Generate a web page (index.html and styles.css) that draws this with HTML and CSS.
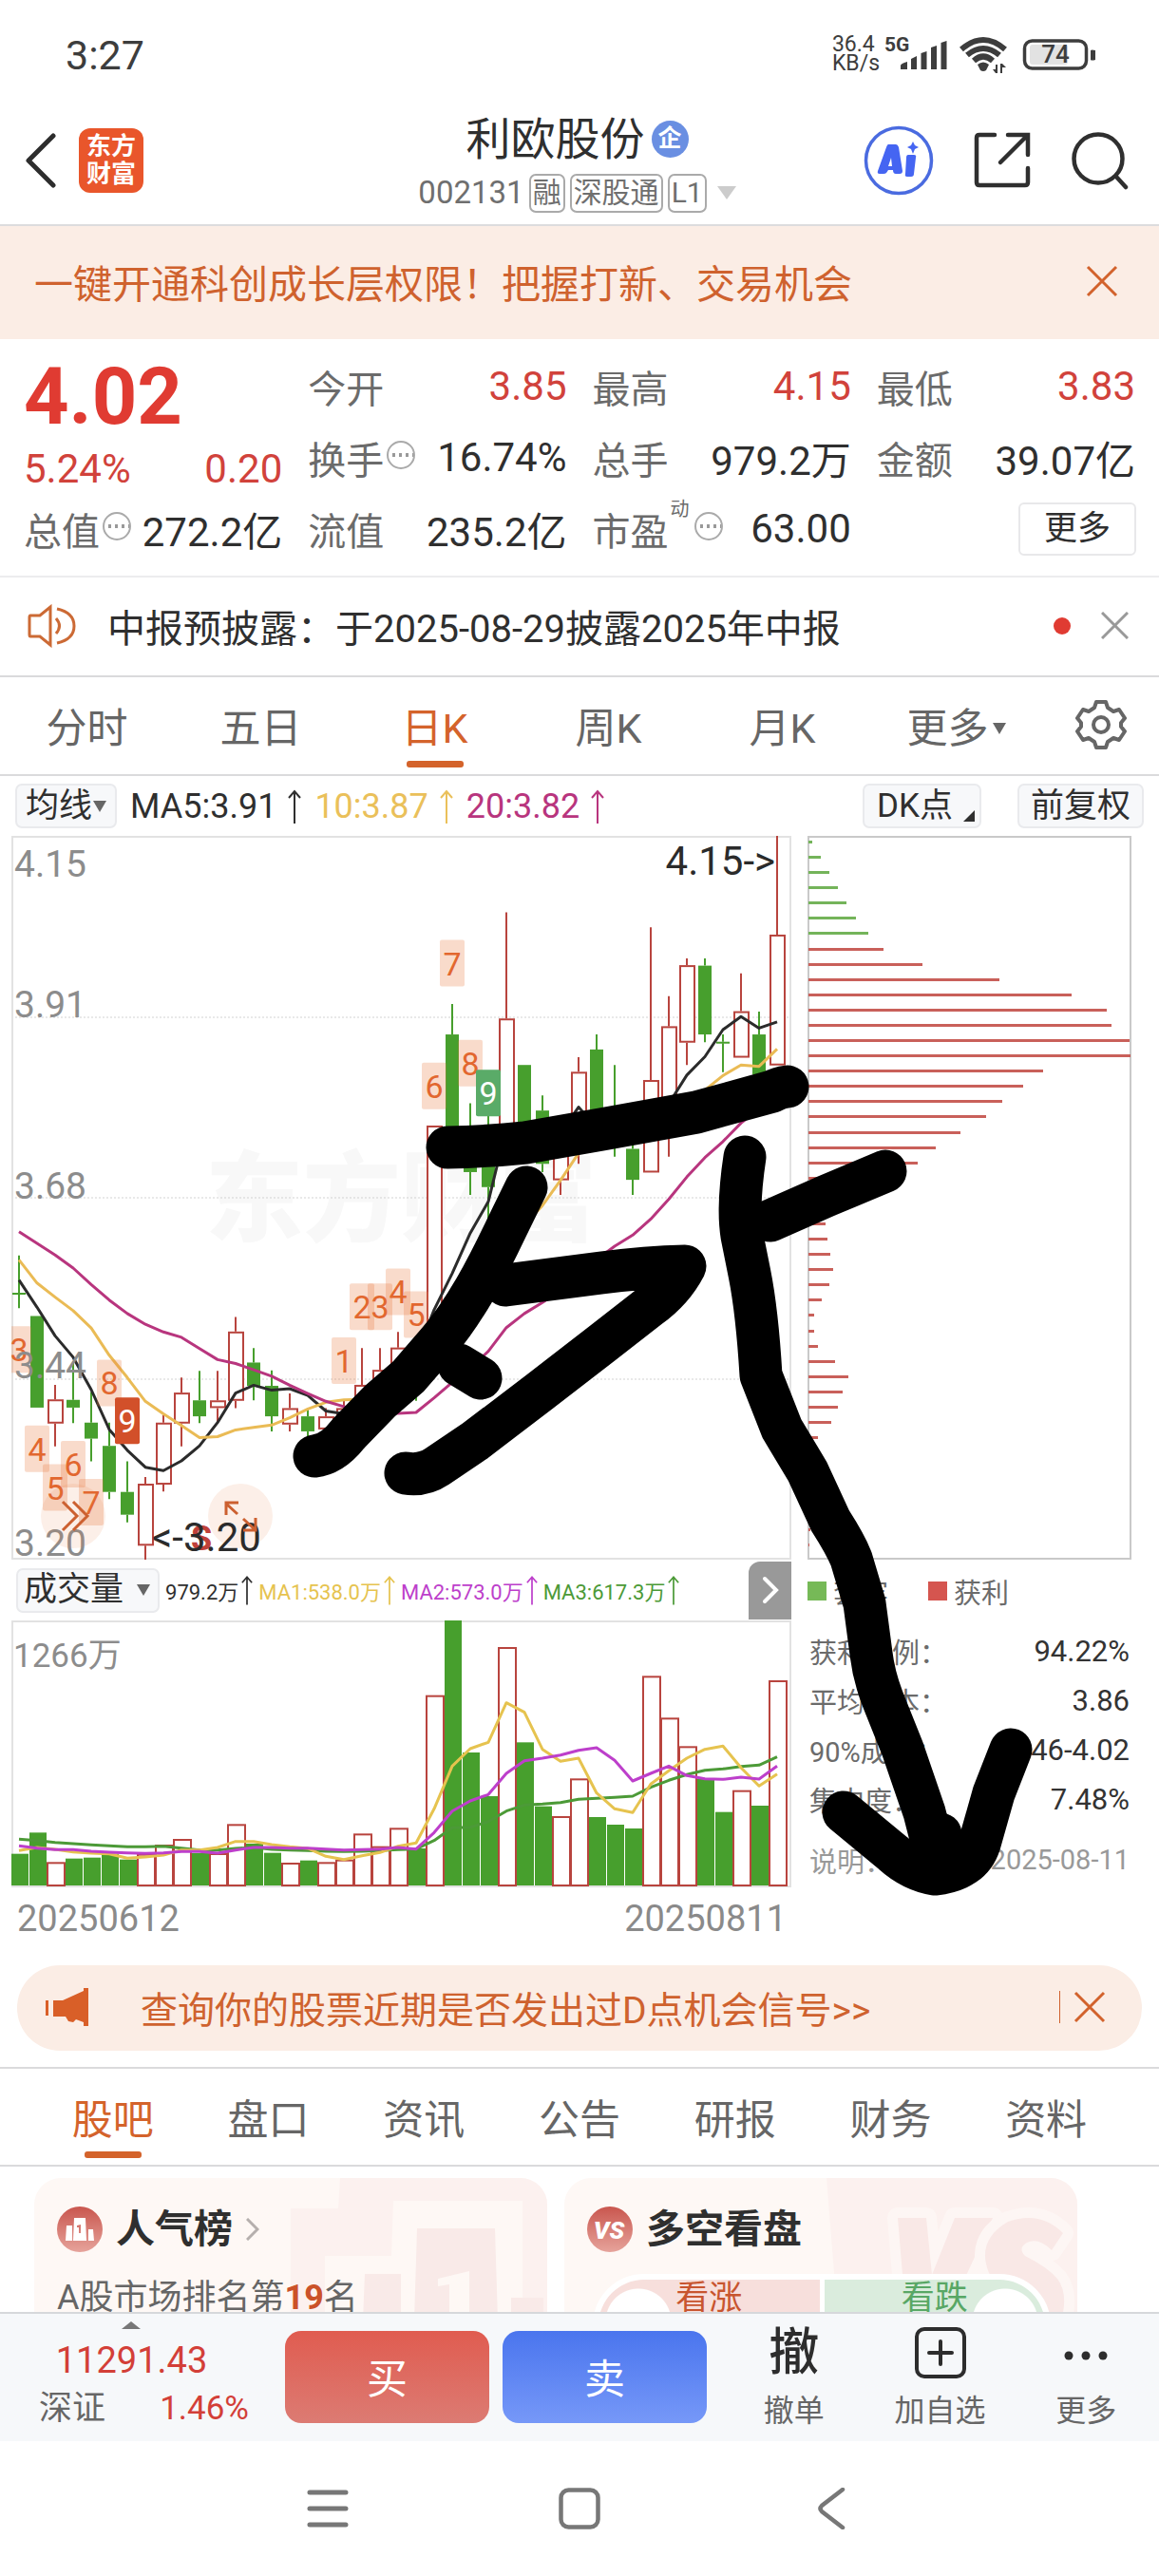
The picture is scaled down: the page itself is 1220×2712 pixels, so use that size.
FILE: index.html
```html
<!DOCTYPE html>
<html lang="zh-CN">
<head>
<meta charset="utf-8">
<meta name="viewport" content="width=device-width, initial-scale=1">
<title>利欧股份 002131</title>
<link rel="stylesheet" href="styles.css">
</head>
<body>
<div class="app">

  <div class="status">
    <span class="status-time">3:27</span>
    <span class="status-speed">36.4<br>KB/s</span>
    <svg class="status-icons" viewBox="930 36 225 44" width="225" height="44" aria-hidden="true">
      <text x="931" y="54" class="status-net">5G</text>
      <g fill="#3d3d3d">
        <path d="M948 73v-4q0-2 7-4v8zM959 73V62l6-3v14zM969.500 73V56l6-2v19zM980 73V50l6-2v25zM990.500 73V45l6-2v30z"/>
        <path d="M1029 68q6-5 12 0l-3 6q-3 2-6 0z"/>
        <path d="M1153 53v10q-4 1-5 0V53q1-1 5 0z"/>
        <path d="M1048 68h2v9h-2l-3-4h3zM1053 67h2l4 4h-4v6h-2z"/>
      </g>
      <g fill="none" stroke="#3d3d3d" stroke-width="6">
        <path d="M1012 52q23-20 46 0M1018 58q17-14 34 0M1025 64q10-9 20 0"/>
        <rect x="1078.500" y="43" width="65" height="29" rx="8" stroke-width="3.500"/>
      </g>
      <rect x="1084" y="47" width="40" height="21" rx="3" fill="#e2e2e2"/>
      <text x="1111" y="66" text-anchor="middle" class="status-battery">74</text>
    </svg>
  </div>

  <header class="header">
    <div class="header-left">
      <button class="icon-btn" aria-label="返回"><svg width="34" height="58" viewBox="0 0 34 58"><path d="M30 3 4 29l26 26" fill="none" stroke="#2d2d2d" stroke-width="5" stroke-linecap="round" stroke-linejoin="round"/></svg></button>
      <a class="logo" href="#">东方<br>财富</a>
    </div>
    <div class="header-title">
      <h1>利欧股份<span class="corp">企</span></h1>
      <div class="header-code">002131<span class="tag">融</span><span class="tag">深股通</span><span class="tag">L1</span><span class="caret"></span></div>
    </div>
    <div class="header-right">
      <button class="icon-btn" aria-label="AI"><svg width="74" height="74" viewBox="0 0 74 74"><circle cx="37" cy="37" r="34.500" fill="none" stroke="#4a6be0" stroke-width="3.500"/><path fill="#4565f2" fill-rule="evenodd" d="M26 20h8q2 0 3 3l4 25q0 3-3 3h-4q-3 0-3-4h-5l-2 3q-1 1-3 1h-4q-3 0-2-3l9-25q1-3 2-3zm3 14-3 9h4zM47 31h6q3 0 2 3l-2 17q0 3-3 3h-4q-3 0-2-3l1-17q0-3 2-3zM52 17l2 4 4 2-4 2-2 5-2-5-4-2 4-2z"/></svg></button>
      <button class="icon-btn" aria-label="分享"><svg width="60" height="60" viewBox="0 0 60 60"><path d="M22 3H6Q3 3 3 6v47q0 3 3 3h48q3 0 3-3V38M36 3h21v21M56 4 28 32" fill="none" stroke="#2f2f2f" stroke-width="4.500" stroke-linecap="round"/></svg></button>
      <button class="icon-btn" aria-label="搜索"><svg width="62" height="62" viewBox="0 0 62 62"><circle cx="29" cy="29" r="25.500" fill="none" stroke="#2f2f2f" stroke-width="4.500"/><path d="m48 48 10 11" stroke="#2f2f2f" stroke-width="4.500" stroke-linecap="round"/></svg></button>
    </div>
  </header>

  <div class="banner">
    <a href="#">一键开通科创成长层权限！把握打新、交易机会</a>
    <button class="icon-btn" aria-label="关闭"><svg width="34" height="34" viewBox="0 0 34 34"><path d="m2 2 30 30M32 2 2 32" stroke="#d2622c" stroke-width="3"/></svg></button>
  </div>

  <section class="quote">
    <div class="quote-col">
      <div class="price">4.02</div>
      <div class="stat change up"><span>5.24%</span><span>0.20</span></div>
      <div class="stat"><span class="label">总值<i class="info"></i></span><span>272.2亿</span></div>
    </div>
    <div class="quote-col">
      <div class="stat"><span class="label">今开</span><span class="up">3.85</span></div>
      <div class="stat"><span class="label">换手<i class="info"></i></span><span>16.74%</span></div>
      <div class="stat"><span class="label">流值</span><span>235.2亿</span></div>
    </div>
    <div class="quote-col">
      <div class="stat"><span class="label">最高</span><span class="up">4.15</span></div>
      <div class="stat"><span class="label">总手</span><span>979.2万</span></div>
      <div class="stat"><span class="label">市盈<small>动</small><i class="info"></i></span><span>63.00</span></div>
    </div>
    <div class="quote-col">
      <div class="stat"><span class="label">最低</span><span class="up">3.83</span></div>
      <div class="stat"><span class="label">金额</span><span>39.07亿</span></div>
      <div class="stat stat-end"><button class="more-btn">更多</button></div>
    </div>
  </section>

  <div class="notice">
    <svg width="52" height="46" viewBox="0 0 52 46"><g fill="none" stroke="#cc6a35" stroke-width="3"><path d="M3 12h10L24 3v40L13 34H3q-1 0-1-2V14q0-2 1-2zM30 15q7 8 0 16"/><path d="M31 5q18 4 18 18T31 41"/></g></svg>
    <a href="#">中报预披露：于2025-08-29披露2025年中报</a>
    <span class="dot"></span>
    <button class="icon-btn" aria-label="关闭"><svg width="29" height="29" viewBox="0 0 29 29"><path d="m1 1 27 27M28 1 1 28" stroke="#999" stroke-width="3"/></svg></button>
  </div>

  <nav class="periods">
    <button>分时</button><button>五日</button><button class="on">日K</button><button>周K</button><button>月K</button><button>更多<span class="caret caret-small"></span></button>
    <button class="gear" aria-label="设置"><svg width="54" height="54" viewBox="0 0 54 54"><g fill="none" stroke="#666" stroke-width="4" stroke-linejoin="round"><path d="M22 3h10l2 6 6 4 6-2 6 9-4 5v4l4 5-6 9-6-2-6 4-2 6H22l-2-6-6-4-6 2-6-9 4-5v-4l-4-5 6-9 6 2 6-4z"/><circle cx="27" cy="27" r="8"/></g></svg></button>
  </nav>

  <section class="charts">
    <div class="toolbar">
      <button class="chip">均线<span class="caret caret-small"></span></button>
      <span class="ma">MA5:3.91<svg class="rise" viewBox="0 0 14 36"><path d="M7 36V2M1 9l6-7 6 7"/></svg></span>
      <span class="ma ma10">10:3.87<svg class="rise" viewBox="0 0 14 36"><path d="M7 36V2M1 9l6-7 6 7"/></svg></span>
      <span class="ma ma20">20:3.82<svg class="rise" viewBox="0 0 14 36"><path d="M7 36V2M1 9l6-7 6 7"/></svg></span>
      <button class="chip chip-dk">DK点<i class="corner"></i></button>
      <button class="chip chip-adj">前复权</button>
    </div>

    <div class="panels">
      <div class="panel-main">
        <svg id="candles" viewBox="12 879 821 762"></svg>
        <div class="volbar">
          <button class="chip chip-vol">成交量<span class="caret caret-small"></span></button>
          <span class="vma">979.2万<svg class="rise" viewBox="0 0 14 36"><path d="M7 36V2M1 9l6-7 6 7"/></svg></span>
          <span class="vma vma1">MA1:538.0万<svg class="rise" viewBox="0 0 14 36"><path d="M7 36V2M1 9l6-7 6 7"/></svg></span>
          <span class="vma vma2">MA2:573.0万<svg class="rise" viewBox="0 0 14 36"><path d="M7 36V2M1 9l6-7 6 7"/></svg></span>
          <span class="vma vma3">MA3:617.3万<svg class="rise" viewBox="0 0 14 36"><path d="M7 36V2M1 9l6-7 6 7"/></svg></span>
          <button class="next" aria-label="下一个"><svg width="20" height="30" viewBox="0 0 20 30"><path d="m4 3 12 12L4 27" fill="none" stroke="#fff" stroke-width="4" stroke-linecap="round"/></svg></button>
        </div>
        <svg id="volume" viewBox="12 1705 821 281"></svg>
        <div class="dates"><span>20250612</span><span>20250811</span></div>
      </div>
      <div class="panel-side">
        <svg id="chips" viewBox="850 879 341 762"></svg>
        <div class="legend"><i class="sq"></i><span>套牢</span><i class="sq sq-red"></i><span>获利</span></div>
        <div class="kv"><span>获利比例：</span><b>94.22%</b></div>
        <div class="kv"><span>平均成本：</span><b>3.86</b></div>
        <div class="kv"><span>90%成本：</span><b>3.46-4.02</b></div>
        <div class="kv"><span>集中度：</span><b>7.48%</b></div>
        <div class="kv kv-note"><span>说明：</span><span>2025-08-11</span></div>
      </div>
    </div>

    <svg class="ink" viewBox="0 816 1220 1237" aria-hidden="true">
      <path d="M471 1207Q515 1206 553 1202L633 1188 733 1170 813 1148Q820 1144 829 1143"/>
      <path d="M554 1249 533 1292Q515 1330 500 1356 480 1390 462 1411L430 1448 400 1474 367 1508Q350 1530 331 1532"/>
      <path d="M532 1352 633 1339Q680 1333 721 1332 708 1357 683 1375L633 1414 567 1465 500 1516 460 1543Q445 1553 427 1550"/>
      <path d="M483 1436 506 1450"/>
      <path d="M784 1217Q776 1270 781 1300L789 1340Q797 1380 801 1447L823 1503 850 1548 874 1600Q890 1625 896 1640L910 1687 917 1740Q920 1765 930 1790L950 1840 973 1907 984 1950"/>
      <path d="M811 1284 870 1258 932 1232"/>
      <path d="M888 1907 940 1950Q960 1968 984 1972 1022 1968 1031 1940L1046 1887 1064 1841M984 1950 990 1930"/>
    </svg>
  </section>

  <div class="promo">
    <svg width="46" height="40" viewBox="0 0 46 40"><path fill="#d95f28" d="M0 13h3v16H0zM8 13h10L40 3V0h5v40h-5v-4l-8-3-3 3-5-1-3-5H8z"/></svg>
    <a href="#">查询你的股票近期是否发出过D点机会信号&gt;&gt;</a>
    <button class="icon-btn promo-close" aria-label="关闭"><svg width="34" height="34" viewBox="0 0 34 34"><path d="m2 2 30 30M32 2 2 32" stroke="#d2622c" stroke-width="3"/></svg></button>
  </div>

  <nav class="sections">
    <button class="on">股吧</button><button>盘口</button><button>资讯</button><button>公告</button><button>研报</button><button>财务</button><button>资料</button>
  </nav>

  <main class="feed">
    <article class="card">
      <svg class="card-art" viewBox="0 0 270 150" width="270" height="150"><path fill="#fcf1ef" d="M52 0h218v150H0V32h50z"/><path fill="#fef8f5" d="M108 24h136v126H36V82h70z"/><path fill="#f9eae8" d="M133 53h82l3 97h-88zM78 101h38v49H76zM232 126h34v24h-34z"/><path fill="#fef8f5" d="m155 106 33-8v52h-21v-38l-12 2z"/></svg>
      <h2><svg width="48" height="48" viewBox="0 0 48 48"><defs><linearGradient id="rg" x2="0" y2="1"><stop stop-color="#c9564e"/><stop offset="1" stop-color="#e6a39b"/></linearGradient></defs><circle cx="24" cy="24" r="24" fill="url(#rg)"/><path fill="#fff" fill-rule="evenodd" d="M10 20h6v16H9zM18 12h12l1 24H17zM33 24h5l1 12h-6zM21 20v2h2v6h2v-9z"/></svg>人气榜<svg class="chev" width="14" height="24" viewBox="0 0 14 24"><path d="m1 1 11 11L1 23" fill="none" stroke="#b5afad" stroke-width="3"/></svg></h2>
      <p>A股市场排名第<b>19</b>名</p>
    </article>
    <article class="card">
      <svg class="card-art" viewBox="0 0 264 150" width="264" height="150"><path fill="#fcf1ef" d="M0 0h264v150H12z"/><g fill="#f9e8e6" stroke="#fdf6f4" stroke-width="22" stroke-linejoin="round" paint-order="stroke"><path d="M75 42h30l6 60 24-60h40L125 150H84z"/><path d="M249 58q-24-24-58-12-34 20-20 54 8 14 34 28 6 6 4 22h38q8-28-4-44-10-12-34-24-8-8 2-14 12-6 26 8z"/></g></svg>
      <h2><svg width="48" height="48" viewBox="0 0 48 48"><circle cx="24" cy="24" r="24" fill="url(#rg)"/><text x="23" y="34" text-anchor="middle" class="vs">VS</text></svg>多空看盘</h2>
      <div class="vote"><button class="bull">看涨</button><button class="bear">看跌</button></div>
    </article>
  </main>

  <footer class="trade">
    <div class="index">
      <span class="index-arrow"></span>
      <span class="index-value">11291.43</span>
      <span class="index-row"><span>深证</span><span class="pct">1.46%</span></span>
    </div>
    <button class="buy">买</button>
    <button class="sell">卖</button>
    <button class="act"><span class="glyph">撤</span>撤单</button>
    <button class="act"><svg width="56" height="56" viewBox="0 0 56 56"><rect x="3" y="3" width="50" height="50" rx="8" fill="none" stroke="#2d2d2d" stroke-width="4"/><path d="M28 16v24M16 28h24" stroke="#2d2d2d" stroke-width="4" stroke-linecap="round"/></svg>加自选</button>
    <button class="act"><svg width="56" height="56" viewBox="0 0 56 56"><g fill="#2d2d2d"><circle cx="10" cy="31" r="4.500"/><circle cx="28" cy="31" r="4.500"/><circle cx="46" cy="31" r="4.500"/></g></svg>更多</button>
  </footer>

  <div class="sysnav">
    <button class="icon-btn" aria-label="最近任务"><svg width="44" height="44" viewBox="0 0 44 44"><path d="M3 5h38M3 22h38M3 39h38" stroke="#777" stroke-width="5" stroke-linecap="round"/></svg></button>
    <button class="icon-btn" aria-label="主页"><svg width="44" height="44" viewBox="0 0 44 44"><rect x="2.500" y="2.500" width="39" height="39" rx="8" fill="none" stroke="#777" stroke-width="4.500"/></svg></button>
    <button class="icon-btn" aria-label="返回"><svg width="44" height="44" viewBox="0 0 44 44"><path d="M34 2 12 19q-3 3 0 6l22 17" fill="none" stroke="#777" stroke-width="4.500" stroke-linecap="round"/></svg></button>
  </div>
</div>
<script src="chart.js"></script>
</body>
</html>
```
FILE: styles.css
```css
* { box-sizing: border-box; }
body { margin: 0; background: #fff; color: #2f2f2f; font-family: Roboto, "Noto Sans CJK SC", sans-serif; }
button { border: 0; padding: 0; margin: 0; background: none; font: inherit; color: inherit; white-space: nowrap; }
a { color: inherit; text-decoration: none; }
svg { display: block; flex: none; }
.app { display: flex; flex-direction: column; height: 100vh; }
.app > * { flex: none; }
.icon-btn { display: flex; flex: none; }

.caret { display: inline-block; border: 10px solid transparent; border-top: 14px solid #ccc; border-bottom: 0; }
.caret-small { border-width: 12px 7px 0; border-top-color: #666; }

/* status bar */
.status { display: flex; align-items: center; height: 110px; padding: 0 65px 0 69px; color: #3d3d3d; }
.status-time { font-size: 43px; margin-right: auto; padding-top: 6px; }
.status-speed { font-size: 23px; line-height: 20px; margin-right: 4px; padding-top: 4px; }
.status-icons { margin-top: 6px; }
.status-net { font-size: 21px; font-weight: 700; fill: #3d3d3d; }
.status-battery { font-size: 26px; font-weight: 500; fill: #3d3d3d; }

/* header */
.header { display: grid; grid-template-columns: 1fr auto 1fr; align-items: center; height: 128px; padding: 0 31px 0 26px; border-bottom: 2px solid #dcdcde; }
.header-left { display: flex; align-items: center; gap: 23px; padding-bottom: 8px; }
.logo { width: 68px; height: 68px; border-radius: 12px; background: #e9562b; color: #fff; font-size: 26px; font-weight: 700; line-height: 29px; text-align: center; padding-top: 5px; }
.header-title { display: flex; flex-direction: column; align-items: center; gap: 10px; padding-bottom: 2px; }
.header-title h1 { display: flex; align-items: center; gap: 7px; margin: 0; font-size: 47px; line-height: 52px; font-weight: 400; }
.corp { width: 39px; height: 39px; border-radius: 50%; background: #6a8fe2; color: #fff; font-size: 25px; line-height: 38px; font-weight: 700; text-align: center; }
.header-code { display: flex; align-items: center; gap: 5px; font-size: 33px; line-height: 40px; color: #6f6f6f; }
.tag { height: 41px; border: 2px solid #aaa; border-radius: 7px; padding: 0 2px; font-size: 30px; line-height: 36px; }
.header-code .caret { margin-left: 6px; }
.header-right { display: flex; justify-content: flex-end; align-items: center; gap: 42px; padding-bottom: 8px; }

/* permission banner */
.banner { display: flex; align-items: center; justify-content: space-between; height: 119px; padding: 0 43px 4px 36px; background: #fbede5; color: #cf622e; font-size: 41px; }

/* quote */
.quote { display: grid; grid-template-columns: repeat(4, minmax(0, 1fr)); gap: 27px; padding: 12px 25px; border-bottom: 2px solid #ececee; }
.price { height: 98px; line-height: 98px; font-size: 83px; font-weight: 700; color: #e03b32; }
.stat { display: flex; align-items: center; justify-content: space-between; height: 75px; font-size: 42px; white-space: nowrap; }
.stat.change { height: 52px; }
.stat-end { justify-content: flex-end; }
.up { color: #d1423b; }
.label { display: flex; align-items: center; font-size: 40px; color: #6b6b6b; }
.label small { align-self: flex-start; font-size: 20px; line-height: 20px; margin: -2px 2px 0; }
.info { width: 30px; height: 30px; margin: 0 0 6px 3px; border: 2px solid #aaa; border-radius: 50%; background: radial-gradient(circle 2px, #999 90%, transparent) 2px 0 / 7px 26px; }
.more-btn { width: 124px; height: 56px; margin-right: -1px; border: 2px solid #e8e8ea; border-radius: 6px; font-size: 35px; line-height: 50px; }

/* notice */
.notice { display: flex; align-items: center; height: 105px; padding: 0 32px 2px 29px; border-bottom: 2px solid #dadadc; font-size: 40px; }
.notice a { margin-left: 32px; flex: 1; }
.dot { width: 18px; height: 18px; margin-right: 32px; border-radius: 50%; background: #e03b32; }

/* period tabs */
.periods { display: grid; grid-template-columns: repeat(6, 3fr) 2fr; height: 104px; border-bottom: 2px solid #dadadc; font-size: 43px; color: #666; }
.periods button, .sections button { position: relative; padding-bottom: 2px; }
.periods .caret { margin: 0 0 9px 4px; }
.gear { display: flex; align-items: center; justify-content: center; }
.on { color: #d4632b; }
.on::after { content: ""; position: absolute; left: 50%; bottom: 7px; width: 60px; height: 7px; margin-left: -30px; border-radius: 3px; background: #d4632b; }

/* chart toolbar */
.charts { position: relative; }
.toolbar { display: flex; align-items: center; height: 63px; padding: 0 16px; font-size: 36px; }
.chip { display: flex; align-items: center; height: 47px; padding: 0 9px; border: 2px solid #e9eaed; border-radius: 7px; background: #f7f8fa; font-size: 35px; line-height: 42px; }
.chip .caret { margin-left: 1px; }
.ma { display: flex; align-items: center; gap: 12px; margin-left: 14px; }
.rise { width: 14px; height: 36px; fill: none; stroke: currentColor; stroke-width: 2; }
.ma10 { color: #eac05a; }
.ma20 { color: #b8357e; }
.chip-dk { position: relative; margin-left: auto; margin-right: 38px; padding: 0 28px 0 13px; }
.chip-adj { padding: 0 12px; }
.corner { position: absolute; right: 5px; bottom: 5px; border-left: 12px solid transparent; border-bottom: 12px solid #2f2f2f; }

/* chart panels */
.panels { display: grid; grid-template-columns: minmax(0, 821fr) minmax(0, 341fr); gap: 17px; padding: 0 29px 0 12px; }
.panels > div > svg { width: 100%; height: auto; }
.volbar { display: flex; align-items: center; height: 64px; padding-left: 5px; }
.chip-vol { padding: 0 8px 0 6px; margin-right: 6px; }
.chip-vol .caret { margin-left: 14px; }
.vma { display: flex; align-items: center; gap: 3px; margin-right: 6px; font-size: 22px; white-space: nowrap; }
.vma .rise { width: 12px; height: 36px; }
.vma1 { color: #e6c34f; }
.vma2 { color: #bd3fcb; }
.vma3 { color: #4c9a37; }
.next { display: flex; align-items: center; justify-content: center; width: 45px; height: 61px; margin-left: auto; border-radius: 12px 0 0 0; background: #999; }
.dates { display: flex; justify-content: space-between; padding: 0 5px 0 6px; height: 67px; line-height: 66px; font-size: 38px; color: #8a8a8a; }
.panel-side { font-size: 29px; color: #6b6b6b; }
.legend { display: flex; align-items: center; height: 66px; margin-bottom: 4px; }
.legend span { margin: 0 42px 0 7px; }
.sq { width: 20px; height: 20px; background: #76b957; }
.sq-red { background: #d5554f; }
.kv { display: flex; justify-content: space-between; align-items: center; height: 52px; padding: 0 2px; }
.kv b { font-size: 31px; font-weight: 400; color: #333; }
.kv-note { height: 76px; color: #999; }

/* pen strokes over the charts */
.ink { position: absolute; left: 0; top: 0; width: 100%; fill: none; stroke: #000; stroke-width: 45; stroke-linecap: round; stroke-linejoin: round; pointer-events: none; }

/* chart text */
.axis { font-size: 39px; fill: #8c8c8c; }
.mark { font-size: 42px; fill: #2b2b2b; }
.seq { font-size: 34px; text-anchor: middle; }
.watermark { font-size: 103px; font-weight: 900; fill: #f8f8f8; }

/* promo */
.promo { display: flex; align-items: center; height: 90px; margin: 15px 18px 17px; padding: 0 38px 2px 30px; border-radius: 45px; background: #fbede5; color: #cf622e; font-size: 39px; }
.promo a { flex: 1; margin-left: 54px; }
.promo-close { padding-left: 14px; border-left: 1px solid #cf622e; }

/* section tabs */
.sections { display: grid; grid-template-columns: repeat(7, 1fr); height: 105px; padding: 0 37px; border-top: 2px solid #dadadc; border-bottom: 2px solid #dadadc; font-size: 43px; color: #666; }

/* feed */
.app > .feed { flex: 1 1 0; min-height: 0; overflow: hidden; display: flex; gap: 18px; padding: 12px 86px 0 36px; }
.card { position: relative; flex: 1; height: 260px; padding: 30px 24px; border-radius: 28px; background: #fef8f5; overflow: hidden; }
.card-art { position: absolute; right: 0; top: 0; }
.card h2 { position: relative; display: flex; align-items: center; margin: 0; height: 48px; font-size: 41px; line-height: 44px; font-weight: 700; gap: 14px; }
.card p { position: relative; margin: 22px 0 0; font-size: 36px; line-height: 52px; color: #666; }
.card b { color: #cb5229; }
.vs { font-size: 26px; font-weight: 900; font-style: italic; fill: #fff; }
.vote { position: relative; display: grid; grid-template-columns: 1fr 1fr; gap: 5px; height: 108px; margin: 23px 4px 0 6px; border: 6px solid #fff; border-radius: 54px; background: #fff; overflow: hidden; font-size: 35px; line-height: 38px; }
.vote button { display: flex; justify-content: center; }
.bull { padding-top: 1px; background: radial-gradient(circle at 42px 44px, #fff 34px, transparent 35px) #f7dfdc; color: #c8552f; }
.bear { padding-top: 1px; background: radial-gradient(circle at calc(100% - 42px) 44px, #fff 34px, transparent 35px) #daecdd; color: #58a765; }

/* trade bar */
.trade { display: flex; height: 136px; padding-top: 18px; border-top: 2px solid #d6d8db; background: #f6f8fa; }
.index { display: flex; flex-direction: column; width: 300px; padding: 0 38px 0 41px; margin-top: -10px; }
.index-arrow { margin-left: 87px; width: 20px; border: 10px solid transparent; border-top: 0; border-bottom: 8px solid #777; }
.index-value { align-self: center; margin-right: 26px; font-size: 38px; line-height: 66px; color: #d33f38; }
.index-row { display: flex; justify-content: space-between; font-size: 35px; line-height: 36px; color: #666; }
.pct { color: #d33f38; }
.buy, .sell { width: 215px; height: 97px; padding-bottom: 4px; border-radius: 17px; color: #fff; font-size: 43px; background: linear-gradient(#e05c50, #dc7b73); }
.sell { margin: 0 15px 0 14px; background: linear-gradient(#4a75ee, #7698f8); }
.act { display: flex; flex-direction: column; align-items: center; flex: 1 1 0; margin-top: -5px; font-size: 32px; line-height: 40px; color: #666; gap: 13px; }
.glyph { font-size: 53px; line-height: 56px; font-weight: 500; color: #2d2d2d; }

/* system navigation */
.sysnav { display: flex; justify-content: center; gap: 221px; height: 142px; padding-top: 49px; }
```
FILE: chart.js
```js
const NS = 'http://www.w3.org/2000/svg';
const RED = '#b8443e', GREEN = '#479f2d';

function add(parent, tag, attrs, text) {
  const el = document.createElementNS(NS, tag);
  for (const key in attrs) el.setAttribute(key, attrs[key]);
  if (text) el.textContent = text;
  parent.appendChild(el);
  return el;
}
const x = i => 20 + 19 * i;
const line = (svg, values, y, color, width) => add(svg, 'polyline', {
  points: values.map((v, i) => x(i) + ',' + y(v).toFixed(1)).join(' '),
  fill: 'none', stroke: color, 'stroke-width': width, 'stroke-linejoin': 'round'
});

/* candles: colour, high, body top, body bottom, low */
const candles = [
  ['g',903,980,984,1012],['g',1028,1028,1217,1217],['r',1170,1200,1250,1297],['g',1122,1201,1217,1249],
  ['g',1185,1248,1281,1328],['g',1248,1296,1391,1406],['g',1328,1391,1438,1454],['r',1360,1374,1502,1532],
  ['r',1233,1248,1376,1390],['r',1155,1186,1250,1297],['g',1141,1202,1235,1249],['r',1141,1202,1218,1249],
  ['r',1030,1060,1203,1218],['g',1094,1124,1172,1202],['g',1140,1172,1235,1266],['r',1188,1218,1252,1266],
  ['g',1218,1235,1266,1280],['r',1218,1235,1262,1280],['r',1203,1218,1250,1262],['r',1094,1170,1230,1240],
  ['r',1094,1139,1200,1210],['r',1061,1093,1160,1170],['g',1130,1140,1180,1203],['r',635,635,1100,1100],
  ['g',384,447,690,690],['g',589,650,731,778],['g',600,640,762,835],['r',195,414,700,700],
  ['g',510,510,690,690],['g',573,604,714,731],['r',680,690,748,778],['r',494,524,690,714],
  ['g',447,478,640,650],['g',510,645,648,699],['g',660,683,747,778],['r',226,541,732,732],
  ['r',368,430,600,699],['r',290,304,464,510],['g',290,305,447,463],['g',447,462,465,525],
  ['r',321,399,495,495],['g',400,447,530,540],['r',37,241,511,511]
];
const ma5 = [954,1010,1069,1113,1180,1262,1305,1340,1347,1327,1296,1248,1187,1171,1181,1178,1192,1224,1230,1215,1190,1160,1110,1015,940,857,792,640,660,660,650,597,640,630,640,620,590,531,493,437,410,434,421];
const ma10 = [912,960,989,1017,1053,1109,1155,1204,1230,1254,1279,1277,1263,1258,1253,1238,1220,1206,1201,1200,1190,1165,1140,1095,1040,990,930,880,840,800,748,692,675,670,655,630,620,590,562,532,510,513,477];
const ma20 = [854,878,902,929,963,995,1023,1045,1061,1072,1095,1118,1126,1139,1152,1171,1188,1204,1215,1222,1228,1229,1227,1197,1165,1135,1101,1052,1023,1000,975,945,912,884,861,828,787,741,701,668,630,600,560];
/* countdown marks: candle index, centre, digit, solid fill */
const marks = [[0,1096,3],[1,1301,4],[2,1381,5],[3,1333,6],[4,1411,7],[5,1165,8],[6,1243,9,'#d2502a'],[18,1119,1],[19,1008,2],[20,1008,3],[21,977,4],[22,1024,5],[23,552,6],[24,299,7],[25,505,8],[26,567,9,'#5aab68']];

const k = document.getElementById('candles');
const py = v => 860 + v / 1.96;
add(k, 'text', { x: 216, y: 1298, class: 'watermark' }, '东方财富');
for (const gy of [1070, 1260, 1451]) add(k, 'path', { d: `M12 ${gy}H832`, stroke: '#d2d2d2', 'stroke-dasharray': '2 2' });
add(k, 'rect', { x: 13, y: 880, width: 819, height: 760, fill: 'none', stroke: '#e2e2e2', 'stroke-width': 2 });
candles.forEach(([c, h, t, b, l], i) => {
  const cx = x(i), T = py(t), B = py(b), color = c === 'g' ? GREEN : RED;
  add(k, 'path', { d: `M${cx} ${py(h)}V${T}M${cx} ${B}V${py(l)}`, stroke: color, 'stroke-width': 2 });
  if (c === 'g') add(k, 'rect', { x: cx - 7, y: T, width: 14, height: Math.max(2, B - T), fill: color });
  else add(k, 'rect', { x: cx - 7, y: T + 1, width: 15, height: B - T - 2, fill: '#fff', stroke: color, 'stroke-width': 2 });
});
line(k, ma5, py, '#2b2b2b', 3);
line(k, ma10, py, '#eabb55', 3);
line(k, ma20, py, '#b8357e', 3);
for (const [i, v, digit, solid] of marks) {
  add(k, 'rect', { x: x(i) - 13, y: py(v) - 24, width: 26, height: 49, rx: 2, fill: solid || '#e87a40', 'fill-opacity': solid ? 1 : 0.27 });
  add(k, 'text', { x: x(i), y: py(v) + 13, class: 'seq', fill: solid ? '#fff' : '#e2672f' }, String(digit));
}
[['4.15', 922], ['3.91', 1070], ['3.68', 1261], ['3.44', 1450], ['3.20', 1637]].forEach(([t, y]) => add(k, 'text', { x: 15, y, class: 'axis' }, t));
for (const cx of [77, 253]) add(k, 'circle', { cx, cy: 1595, r: 34, fill: '#e87a40', 'fill-opacity': 0.12 });
add(k, 'path', { d: 'M66 1580l15 15-15 15M77 1580l15 15-15 15', fill: 'none', stroke: '#cc6030', 'stroke-width': 3 });
add(k, 'text', { x: 201, y: 1631, 'font-size': 36, 'font-weight': 700, fill: '#c0403a' }, 'S');
add(k, 'text', { x: 160, y: 1632, class: 'mark' }, '<-3.20');
add(k, 'path', { d: 'M250 1593l-12-11M238 1594v-13h13M256 1598l12 11M269 1597v13h-13', fill: 'none', stroke: '#cc6030', 'stroke-width': 3 });
add(k, 'text', { x: 816, y: 920, class: 'mark', 'text-anchor': 'end' }, '4.15->');

/* volume bars and their averages */
const vol = [932,865,958,947,944,932,950,932,903,885,930,930,838,900,929,960,953,958,950,868,908,850,915,431,195,612,750,279,580,782,813,694,816,840,852,370,502,592,695,800,731,780,384];
const volColor = 'ggrggggrrrgrrggrgrrrrrgrgggrggrrgggrrrggrgr';
const v1 = [922,912,918,926,930,932,946,942,936,920,920,912,893,893,903,910,915,940,950,938,928,908,898,790,655,600,580,455,485,602,640,630,740,790,802,712,670,630,602,592,660,718,680];
const v2 = [907,914,919,919,924,927,929,931,929,925,925,930,920,912,912,914,914,917,920,919,917,912,917,865,797,765,745,678,638,630,620,605,597,637,702,678,655,685,695,697,690,696,655];
const v3 = [886,890,896,900,904,907,910,910,908,914,920,920,915,912,918,920,922,924,925,924,922,919,917,890,850,848,830,797,778,775,770,760,757,754,750,722,700,682,668,664,656,652,626];
const v = document.getElementById('volume');
const vy = n => 1640 + n / 3;
add(v, 'rect', { x: 13, y: 1706, width: 819, height: 279, fill: 'none', stroke: '#e2e2e2', 'stroke-width': 2 });
vol.forEach((n, i) => {
  const top = vy(n);
  if (volColor[i] === 'g') add(v, 'rect', { x: x(i) - 8, y: top, width: 18, height: 1984 - top, fill: GREEN });
  else add(v, 'rect', { x: x(i) - 8, y: top + 1, width: 18, height: 1983 - top, fill: '#fff', stroke: RED, 'stroke-width': 2 });
});
line(v, v3, vy, '#4c9a37', 3);
line(v, v1, vy, '#e6c34f', 3);
line(v, v2, vy, '#bd3fcb', 3);
add(v, 'text', { x: 14, y: 1754, 'font-size': 35, fill: '#8c8c8c' }, '1266万');

/* cost distribution, from the highest price down */
const cost = [4,13,22,31,40,50,63,79,120,201,277,314,319,338,339,247,226,204,187,160,134,115,60,40,25,18,20,23,26,22,14,6,6,10,28,42,36,31,24,10,0,0,0,0,0,2,1];
const s = document.getElementById('chips');
add(s, 'rect', { x: 851, y: 880, width: 339, height: 760, fill: 'none', stroke: '#c9c9c9', 'stroke-width': 2 });
cost.forEach((w, i) => {
  if (w) add(s, 'rect', { x: 851, y: Math.round(884 + i * 16.08), width: w, height: 3, fill: i < 7 ? '#74b45a' : '#c9605a' });
});
```
